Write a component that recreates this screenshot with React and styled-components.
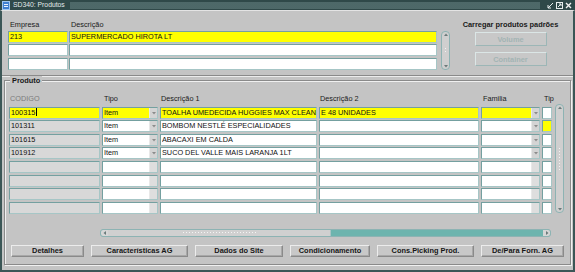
import React from 'react';
import styled, { createGlobalStyle } from 'styled-components';

const GlobalStyle = createGlobalStyle`
  html, body { margin: 0; padding: 0; background: #c4c4c4; }
  body { font-family: "Liberation Sans", Arial, sans-serif; }
  * { box-sizing: border-box; }
`;

const Window = styled.div`
  width: 575px;
  height: 272px;
  display: flex;
  flex-direction: column;
  background: #c4c4c4;
  overflow: hidden;
`;

const TitleBar = styled.div`
  height: 10px;
  flex: none;
  display: flex;
  align-items: center;
  gap: 3px;
  padding: 0 3px 0 2px;
  background: #2f4949;
`;

const TitleText = styled.span`
  color: #e2eaea;
  font-size: 6.8px;
  line-height: 10px;
  white-space: nowrap;
`;

const Dots = styled.div`
  flex: 1;
  height: 7px;
  margin: 0 4px 0 2px;
  background-image: radial-gradient(circle, #6e8c8c 0.55px, transparent 0.85px);
  background-size: 2px 2px;
`;

const Controls = styled.div`
  display: flex;
  gap: 2px;
  align-items: center;
`;

const Body = styled.div`
  flex: 1;
  display: flex;
  flex-direction: column;
  border: 2px solid #3b5656;
  border-top: 1px solid #e4e4e4;
`;

const TopPanel = styled.div`
  height: 65px;
  flex: none;
  display: flex;
  padding: 9px 0 0 6px;
  border-bottom: 1px solid #8a8a8a;
  box-shadow: 0 1px 0 #ececec;
`;

const TopTable = styled.div`
  display: grid;
  grid-template-columns: 60px 368px;
  grid-template-rows: 9px repeat(3, 12px);
  column-gap: 1px;
  row-gap: 1.5px;
`;

const Label = styled.div`
  font-size: 7.3px;
  line-height: 9px;
  color: ${p => (p.$muted ? '#7c7c7c' : '#1a1a1a')};
  padding-left: ${p => p.$indent || 2}px;
  white-space: nowrap;
`;

const Field = styled.div`
  height: 12px;
  display: flex;
  align-items: center;
  border: 1px solid;
  border-color: #74a0a0 #a6c6c6 #a6c6c6 #74a0a0;
  background: ${p => p.$bg || '#ffffff'};
  font-size: 7.3px;
  color: #111111;
  padding-left: 1px;
  white-space: nowrap;
  overflow: hidden;
`;

const FieldText = styled.span`
  flex: 1;
  line-height: 10px;
  overflow: hidden;
`;

const Caret = styled.span`
  display: inline-block;
  width: 1px;
  height: 8px;
  margin-left: 0.5px;
  vertical-align: -1px;
  background: #000;
`;

const DropBtn = styled.div`
  width: 8px;
  height: 100%;
  flex: none;
  display: flex;
  align-items: center;
  justify-content: center;
  background: ${p => (p.$dim ? '#dedede' : '#d4d4d4')};
  border-left: 1px solid #e8e8e8;
`;

const VScroll = styled.div`
  width: 9px;
  height: ${p => p.$h}px;
  margin-top: ${p => p.$top}px;
  margin-left: ${p => p.$left}px;
  flex: none;
  display: flex;
  flex-direction: column;
  align-items: center;
  justify-content: space-between;
  padding: 1px 0;
  border: 1px solid #8db3b3;
  border-radius: 4px;
  background: #cfcfcf;
`;

const Grip = styled.div`
  width: 3px;
  height: ${p => p.$len}px;
  background-image: radial-gradient(circle, #f2f2f2 0.6px, transparent 0.9px);
  background-size: 3px 3px;
`;

const LoadBox = styled.div`
  flex: 1;
  display: flex;
  flex-direction: column;
  align-items: center;
  margin-right: 2px;
`;

const BoxTitle = styled.div`
  font-size: 7.4px;
  font-weight: bold;
  line-height: 9px;
  color: #1a1a1a;
  white-space: nowrap;
`;

const Button = styled.button`
  width: ${p => p.$w}px;
  height: ${p => p.$h || 12}px;
  margin-top: ${p => p.$mt || 0}px;
  flex: none;
  padding: 0;
  font-family: "Liberation Sans", Arial, sans-serif;
  font-size: 7.4px;
  font-weight: bold;
  color: ${p => (p.disabled ? '#a3b4b4' : '#161616')};
  background: #c8c8c8;
  border: 1px solid;
  border-color: ${p => (p.disabled ? '#dbe6e6 #9cb6b6 #9cb6b6 #dbe6e6' : '#ececec #8a8a8a #8a8a8a #ececec')};
  box-shadow: ${p => (p.disabled ? 'none' : 'inset -1px -1px 0 #a8a8a8')};
  white-space: nowrap;
`;

const Frame = styled.fieldset`
  margin: 0 2px 0 2px;
  padding: 9px 4px 7px 4px;
  min-width: 0;
  border: 1px solid #8a8a8a;
  box-shadow: inset 1px 1px 0 #f0f0f0, 1px 1px 0 #f0f0f0;
`;

const Legend = styled.legend`
  margin-left: 1px;
  padding: 0 2px;
  font-size: 7.4px;
  font-weight: bold;
  line-height: 9px;
  color: #1a1a1a;
  background: #c4c4c4;
`;

const GridWrap = styled.div`
  display: flex;
`;

const ProdGrid = styled.div`
  display: grid;
  grid-template-columns: 91px 56px 157px 160px 59px 10px;
  grid-template-rows: 11px repeat(8, 12px);
  column-gap: 2px;
  row-gap: 1.6px;
`;

const HScroll = styled.div`
  width: 451px;
  height: 8px;
  margin: 15px 0 0 91px;
  display: flex;
  border: 1px solid #8db3b3;
  border-radius: 3px;
  background: #6db4ae;
  overflow: hidden;
`;

const ArrowCell = styled.div`
  width: 7px;
  flex: none;
  display: flex;
  align-items: center;
  justify-content: center;
  background: #d6d6d6;
`;

const Thumb = styled.div`
  width: 223px;
  flex: none;
  display: flex;
  align-items: center;
  justify-content: center;
  background: #d0d0d0;
  border-right: 1px solid #a9c4c4;
`;

const HGrip = styled.div`
  width: 74px;
  height: 3px;
  background-image: radial-gradient(circle, #f4f4f4 0.6px, transparent 0.9px);
  background-size: 3px 3px;
`;

const Track = styled.div`
  flex: 1;
`;

const ButtonRow = styled.div`
  display: flex;
  gap: 7px;
  margin: 8px 0 0 2px;
`;

const Tri = ({ dir = 'down', color = '#707070', size = 4 }) => {
  const pts = {
    down: '0,1 4,1 2,3.5',
    up: '0,3 4,3 2,0.5',
    left: '3,0 3,4 0.5,2',
    right: '1,0 1,4 3.5,2',
  }[dir];
  return (
    <svg width={size} height={size} viewBox="0 0 4 4">
      <polygon points={pts} fill={color} />
    </svg>
  );
};

const AppIcon = () => (
  <svg width="8" height="9" viewBox="0 0 8 9">
    <rect x="0.5" y="0.5" width="7" height="8" fill="#3f7fd0" stroke="#9fc6f0" strokeWidth="1" />
    <rect x="2" y="3" width="4" height="1" fill="#e8f2ff" />
    <rect x="2" y="5" width="4" height="1" fill="#e8f2ff" />
  </svg>
);

const WinButtons = () => (
  <Controls>
    <svg width="7" height="7" viewBox="0 0 7 7">
      <path d="M1 6 L6 1 M1 6 H4 M1 6 V3" stroke="#e8eeee" strokeWidth="1" fill="none" />
    </svg>
    <svg width="7" height="7" viewBox="0 0 7 7">
      <rect x="0.5" y="0.5" width="6" height="6" fill="none" stroke="#e8eeee" />
      <path d="M2 5 L5 2 M3 2 H5 V4" stroke="#e8eeee" strokeWidth="1" fill="none" />
    </svg>
    <svg width="7" height="7" viewBox="0 0 7 7">
      <path d="M1 1 L6 6 M6 1 L1 6" stroke="#f2f2f2" strokeWidth="1.4" />
    </svg>
  </Controls>
);

const empresas = [
  { cod: '213', desc: 'SUPERMERCADO HIROTA LT', sel: true },
  {},
  {},
];

const produtos = [
  { cod: '100315', tipo: 'Item', d1: 'TOALHA UMEDECIDA HUGGIES MAX CLEAN', d2: 'E 48 UNIDADES', sel: true },
  { cod: '101311', tipo: 'Item', d1: 'BOMBOM NESTLÉ ESPECIALIDADES', tip: true },
  { cod: '101615', tipo: 'Item', d1: 'ABACAXI EM CALDA' },
  { cod: '101912', tipo: 'Item', d1: 'SUCO DEL VALLE MAIS LARANJA 1LT' },
  {},
  {},
  {},
  {},
];

const botoes = [
  ['Detalhes', 73],
  ['Características AG', 97],
  ['Dados do Site', 88],
  ['Condicionamento', 80],
  ['Cons.Picking Prod.', 97],
  ['De/Para Forn. AG', 83],
];

const YELLOW = '#ffff00';

export default function App() {
  return (
    <>
      <GlobalStyle />
      <Window>
        <TitleBar>
          <AppIcon />
          <TitleText>SD340: Produtos</TitleText>
          <Dots />
          <WinButtons />
        </TitleBar>
        <Body>
          <TopPanel>
            <TopTable>
              <Label>Empresa</Label>
              <Label>Descrição</Label>
              {empresas.map((e, i) => (
                <React.Fragment key={i}>
                  <Field $bg={e.sel ? YELLOW : undefined}><FieldText>{e.cod}</FieldText></Field>
                  <Field $bg={e.sel ? YELLOW : undefined}><FieldText>{e.desc}</FieldText></Field>
                </React.Fragment>
              ))}
            </TopTable>
            <VScroll $h={39} $top={10.5} $left={4}>
              <Tri dir="up" color="#6a7a7a" />
              <Grip $len={6} />
              <Tri dir="down" color="#6a7a7a" />
            </VScroll>
            <LoadBox>
              <BoxTitle>Carregar produtos padrões</BoxTitle>
              <Button disabled $w={72} $h={14} $mt={3}>Volume</Button>
              <Button disabled $w={72} $h={14} $mt={6}>Container</Button>
            </LoadBox>
          </TopPanel>

          <Frame>
            <Legend>Produto</Legend>
            <GridWrap>
              <ProdGrid>
                <Label $muted $indent={1}>CODIGO</Label>
                <Label $indent={0}>Tipo</Label>
                <Label $indent={1}>Descrição 1</Label>
                <Label $indent={1}>Descrição 2</Label>
                <Label $indent={0}>Familia</Label>
                <Label $indent={0}>Tip</Label>
                {produtos.map((p, i) => {
                  const bg = p.sel ? YELLOW : undefined;
                  const filled = Boolean(p.cod);
                  return (
                    <React.Fragment key={i}>
                      <Field $bg={p.sel ? YELLOW : '#d8d8d8'}>
                        <FieldText>{p.cod}{p.sel && <Caret />}</FieldText>
                      </Field>
                      <Field $bg={bg}>
                        <FieldText>{p.tipo}</FieldText>
                        <DropBtn $dim={!filled}>{filled && <Tri color="#8c8c8c" />}</DropBtn>
                      </Field>
                      <Field $bg={bg}><FieldText>{p.d1}</FieldText></Field>
                      <Field $bg={bg}><FieldText>{p.d2}</FieldText></Field>
                      <Field $bg={bg}>
                        <FieldText />
                        <DropBtn $dim={!filled}>{filled && <Tri color="#8c8c8c" />}</DropBtn>
                      </Field>
                      <Field $bg={p.tip ? YELLOW : undefined} />
                    </React.Fragment>
                  );
                })}
              </ProdGrid>
              <VScroll $h={109} $top={10} $left={3}>
                <Tri dir="up" color="#6a7a7a" />
                <Grip $len={24} />
                <Tri dir="down" color="#6a7a7a" />
              </VScroll>
            </GridWrap>
            <HScroll>
              <ArrowCell><Tri dir="left" color="#6a7a7a" /></ArrowCell>
              <Thumb><HGrip /></Thumb>
              <Track />
              <ArrowCell><Tri dir="right" color="#6a7a7a" /></ArrowCell>
            </HScroll>
            <ButtonRow>
              {botoes.map(([label, w]) => (
                <Button key={label} $w={w}>{label}</Button>
              ))}
            </ButtonRow>
          </Frame>
        </Body>
      </Window>
    </>
  );
}
